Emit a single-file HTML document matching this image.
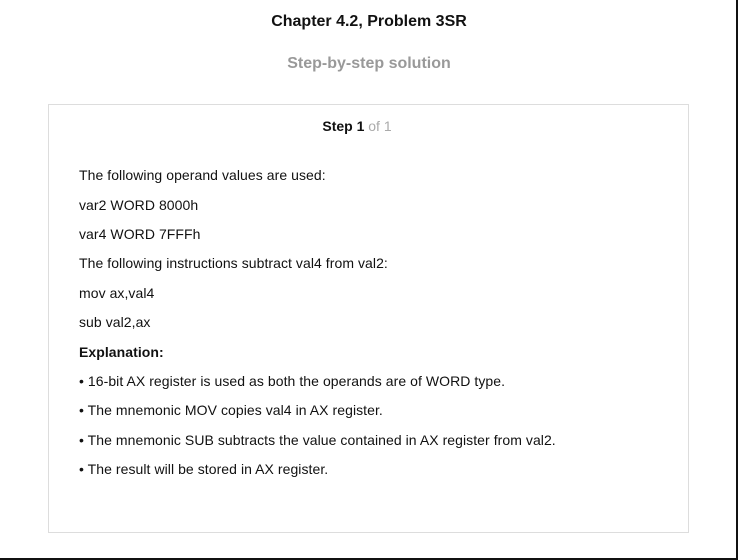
<!DOCTYPE html>
<html><head><meta charset="utf-8"><style>
html,body{margin:0;padding:0;background:#fff;}
body{width:738px;height:560px;position:relative;overflow:hidden;font-family:"Liberation Sans",Arial,sans-serif;color:#111;}
.frame{position:absolute;left:0;top:0;width:736px;height:558px;border-right:2px solid #111;border-bottom:2px solid #111;}
.t{position:absolute;left:0;width:738px;text-align:center;font-weight:bold;}
.box{position:absolute;left:48px;top:104px;width:639px;height:427px;border:1px solid #ddd;}
.l{position:absolute;left:79px;font-size:14px;line-height:16px;white-space:nowrap;letter-spacing:0.06px;}
</style></head><body>
<div class="frame"></div>
<div class="t" style="top:12px;font-size:16px;line-height:19px;color:#111">Chapter 4.2, Problem 3SR</div>
<div class="t" style="top:54px;font-size:16px;line-height:19px;color:#999">Step-by-step solution</div>
<div class="box"></div>
<div class="t" style="top:118px;font-size:14px;line-height:16px;left:-12px;">Step 1 <span style="font-weight:normal;color:#aaa">of 1</span></div>
<div class="l" style="top:167px">The following operand values are used:</div>
<div class="l" style="top:197px">var2 WORD 8000h</div>
<div class="l" style="top:226px">var4 WORD 7FFFh</div>
<div class="l" style="top:255px">The following instructions subtract val4 from val2:</div>
<div class="l" style="top:285px">mov ax,val4</div>
<div class="l" style="top:314px">sub val2,ax</div>
<div class="l" style="top:344px;font-weight:bold">Explanation:</div>
<div class="l" style="top:373px">• 16-bit AX register is used as both the operands are of WORD type.</div>
<div class="l" style="top:402px">• The mnemonic MOV copies val4 in AX register.</div>
<div class="l" style="top:432px">• The mnemonic SUB subtracts the value contained in AX register from val2.</div>
<div class="l" style="top:461px">• The result will be stored in AX register.</div>
</body></html>
